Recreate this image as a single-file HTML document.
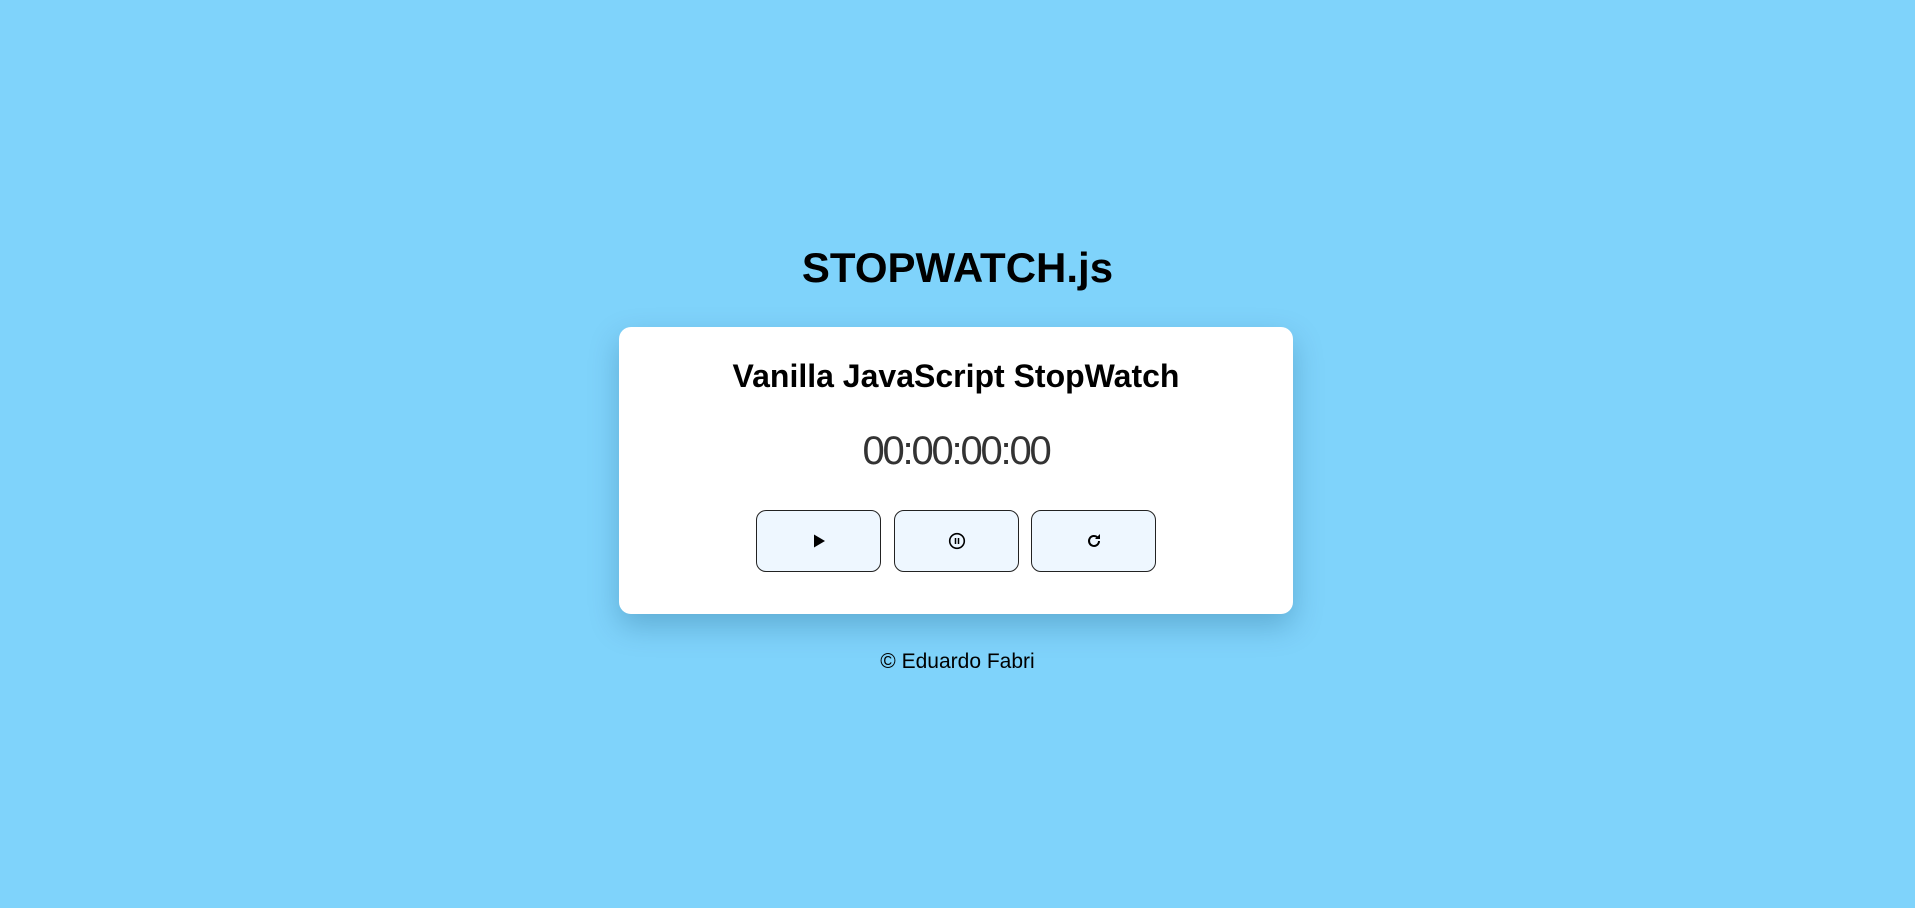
<!DOCTYPE html>
<html><head><meta charset="utf-8"><style>
html,body{margin:0;padding:0;width:1915px;height:908px;background:#7fd3fb;overflow:hidden;font-family:"Liberation Sans",sans-serif;color:#000}
h1{position:absolute;left:0;width:1915px;top:233px;margin:0;text-align:center;font-size:42px;font-weight:bold;line-height:70px;letter-spacing:0px}
.card{position:absolute;left:619px;top:327px;width:674px;height:287px;background:#fff;border-radius:12px;box-shadow:0 12px 30px rgba(0,60,100,.25)}
h2{position:absolute;left:0;width:674px;top:24px;margin:0;text-align:center;font-size:32px;font-weight:bold;line-height:50px}
.time{position:absolute;left:0;width:674px;top:99px;text-align:center;font-size:40px;font-weight:normal;line-height:50px;color:#333;letter-spacing:-2.2px}
.btn{position:absolute;top:183px;width:123px;height:60px;border:1px solid #222;border-radius:10px;background:#eef7ff}
.btn svg{position:absolute;left:50%;top:50%;transform:translate(-50%,-50%)}
.foot{position:absolute;left:0;width:1915px;top:647px;text-align:center;font-size:21px;line-height:30px}
</style></head><body>
<h1>STOPWATCH.js</h1>
<div class="card">
<h2>Vanilla JavaScript StopWatch</h2>
<div class="time">00:00:00:00</div>
<div class="btn" style="left:137px"><svg width="16" height="16" viewBox="0 0 16 16"><path d="M3 1.5 L14 8 L3 14.5 Z" fill="#000"/></svg></div>
<div class="btn" style="left:275px"><svg width="18" height="18" viewBox="0 0 18 18"><circle cx="9" cy="9" r="7.3" fill="none" stroke="#000" stroke-width="1.6"/><path d="M7.5 6v6M10.5 6v6" stroke="#000" stroke-width="1.5"/></svg></div>
<div class="btn" style="left:412px"><svg width="18" height="18" viewBox="0 0 18 18"><path d="M14 9a5 5 0 1 1-1.6-3.7" fill="none" stroke="#000" stroke-width="2"/><path d="M15 2v5h-5z" fill="#000"/></svg></div>
</div>
<div class="foot">© Eduardo Fabri</div>
</body></html>
